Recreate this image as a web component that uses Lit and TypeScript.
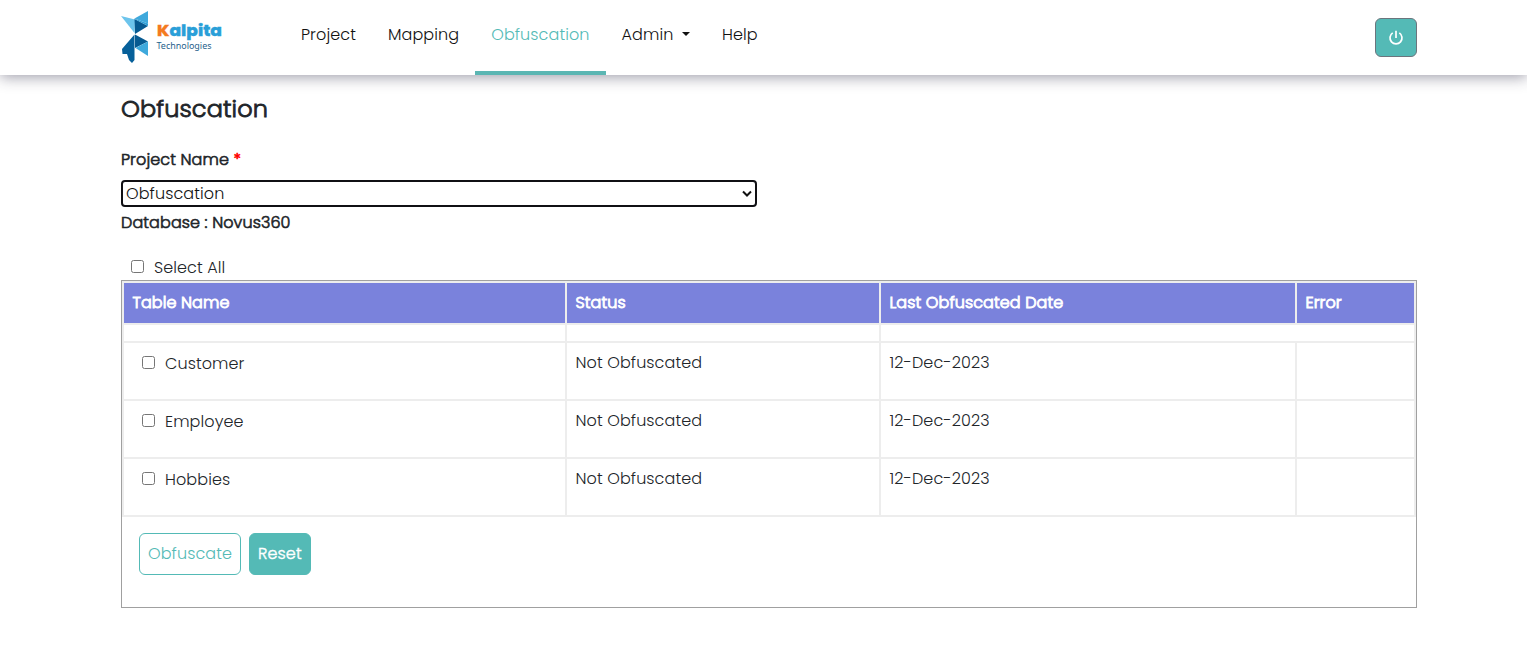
import { LitElement, html, css } from "lit";
import { customElement } from "lit/decorators.js";

const names = ["Customer", "Employee", "Hobbies"];

@customElement("app-root")
class AppRoot extends LitElement {
  static styles = css`
    :host {
      display: block;
      min-height: 662px;
      background: #fff;
      color: #212529;
      font: 300 16px/24px Poppins, Inter, "Open Sans", sans-serif;
      letter-spacing: 0.1px;
    }
    * { box-sizing: border-box; }
    .header {
      height: 75px;
      padding: 0 110px 0 121px;
      display: flex;
      align-items: flex-start;
      box-shadow: 0 2px 14px rgba(40, 36, 66, 0.46);
    }
    .logo { width: 104px; height: 56px; margin-top: 9px; flex: none; letter-spacing: 0; }
    .brand { font: 800 16px Poppins, sans-serif; }
    .sub { font: 400 9.5px "Noto Sans", sans-serif; }
    .nav { display: flex; margin-left: 60px; color: #111; }
    .link { height: 75px; padding: 23px 16px 0 16px; display: flex; }
    .link.active { color: #54bab6; border-bottom: 4px solid #5bb6b3; }
    .caret {
      margin: 9px 0 0 8.500px;
      width: 8px; height: 4px;
      border: 4px solid transparent;
      border-top-color: #111;
      border-bottom: 0;
    }
    .power {
      width: 42px; height: 39px;
      margin: 18px 0 0 auto;
      display: grid; place-items: center;
      background: #54bab6;
      border: 1px solid #6c757d;
      border-radius: 6px;
      padding: 0;
    }
    .main { padding: 16px 110px 0 121px; }
    .title {
      margin: 0; height: 36px;
      font-size: 24px; line-height: 35px; font-weight: 300;
      -webkit-text-stroke: 0.85px currentColor;
    }
    .bold { -webkit-text-stroke: 0.62px currentColor; }
    .field { margin-top: 21px; height: 24px; display: flex; }
    .req { color: #f00; margin-left: 4.500px; }
    .picker { position: relative; width: 636px; height: 27px; margin-top: 8px; }
    .select {
      appearance: none;
      width: 100%; height: 27px;
      padding: 0 3px;
      border: 2px solid #101014;
      border-radius: 4px;
      background: #fff; color: #111;
      font: inherit; line-height: 23px;
      letter-spacing: inherit;
      outline: none;
      display: block;
    }
    .chevron { position: absolute; right: 5px; top: 10px; }
    .db { margin-top: 4px; height: 24px; }
    .all { display: flex; margin: 21px 0 0 10px; height: 24px; }
    .check { width: 13px; height: 13px; margin: 4px 10px 0 0; flex: none; }
    .panel { border: 1px solid #a0a0a0; height: 328px; }
    .table {
      display: grid;
      grid-template-columns: 441px 312px 414px 117px;
      grid-template-rows: 40px 16px 56px 56px 56px;
      gap: 2px;
      padding: 2px;
      background: #ededed;
    }
    .head { background: #7a82dc; color: #fff; padding: 8px 8px 8px 8.500px; -webkit-text-stroke: 0.9px #fff; }
    .cell { background: #fff; padding: 8px 8px 8px 8.500px; }
    .wide { grid-column: span 2; }
    .name { display: flex; padding: 9px 8px 8px 18px; }
    .actions { display: flex; gap: 8px; padding: 16px 17px; }
    .btn {
      height: 42px; border-radius: 6px; border: 1px solid #54bab6;
      padding: 0 8px; font: inherit; letter-spacing: inherit;
      background: #fff; color: #54bab6;
    }
    .btn.solid { background: #54bab6; color: #fff; -webkit-text-stroke: 0.4px #fff; }
  `;

  render() {
    return html`
      <header class="header">
        <svg class="logo" viewBox="0 0 104 56">
          <path fill="#6cc4ec" d="M0 7L14 10.500L13.500 24Z" />
          <path fill="#3fa9dc" d="M13.500 9.500L27 2V14.500Z" />
          <path fill="#075a91" d="M13.500 10L27 17L14 25Z" />
          <path fill="#2f9fd6" d="M27 14.500V17L13.500 10V9.500Z" />
          <path fill="#075a91" d="M14 25.500L27 32.500L14 39Z" />
          <path fill="#3fa9dc" d="M27 32.500V47L14.500 39Z" />
          <path fill="#07609a" d="M13.500 25.500L1 40L1.500 45H6L8 51L11 54L13.500 51Z" />
          <text class="brand" x="36" y="26.500" textLength="65" lengthAdjust="spacingAndGlyphs" fill="#2a9fd8"
            stroke="#2a9fd8" stroke-width="0.300"><tspan fill="#f47a20" stroke="#f47a20">K</tspan>alpita</text>
          <text class="sub" x="35.500" y="39.500" textLength="55" lengthAdjust="spacingAndGlyphs" fill="#1f5f8b">Technologies</text>
        </svg>
        <nav class="nav">
          <a class="link">Project</a>
          <a class="link">Mapping</a>
          <a class="link active">Obfuscation</a>
          <a class="link">Admin<span class="caret"></span></a>
          <a class="link">Help</a>
        </nav>
        <button class="power" aria-label="Log out">
          <svg width="16" height="16" viewBox="0 0 16 16" fill="none" stroke="#fff" stroke-width="1.700">
            <path d="M8 0.800V8M4.700 2.900A6 6 0 1 0 11.300 2.900" />
          </svg>
        </button>
      </header>
      <main class="main">
        <h1 class="title">Obfuscation</h1>
        <div class="field bold">Project Name<span class="req">*</span></div>
        <div class="picker">
          <select class="select"><option>Obfuscation</option></select>
          <svg class="chevron" width="10" height="8" viewBox="0 0 10 8" fill="none" stroke="#111" stroke-width="2">
            <path d="M1 1.500L5 5.500L9 1.500" />
          </svg>
        </div>
        <div class="db bold">Database : Novus360</div>
        <label class="all"><input class="check" type="checkbox" />Select All</label>
        <section class="panel">
          <div class="table">
            <div class="head">Table Name</div>
            <div class="head">Status</div>
            <div class="head">Last Obfuscated Date</div>
            <div class="head">Error</div>
            <div class="cell"></div>
            <div class="cell"></div>
            <div class="cell wide"></div>
            ${names.map(
              (name) => html`
                <label class="cell name"><input class="check" type="checkbox" />${name}</label>
                <div class="cell">Not Obfuscated</div>
                <div class="cell">12-Dec-2023</div>
                <div class="cell"></div>
              `
            )}
          </div>
          <div class="actions">
            <button class="btn">Obfuscate</button>
            <button class="btn solid">Reset</button>
          </div>
        </section>
      </main>
    `;
  }
}
